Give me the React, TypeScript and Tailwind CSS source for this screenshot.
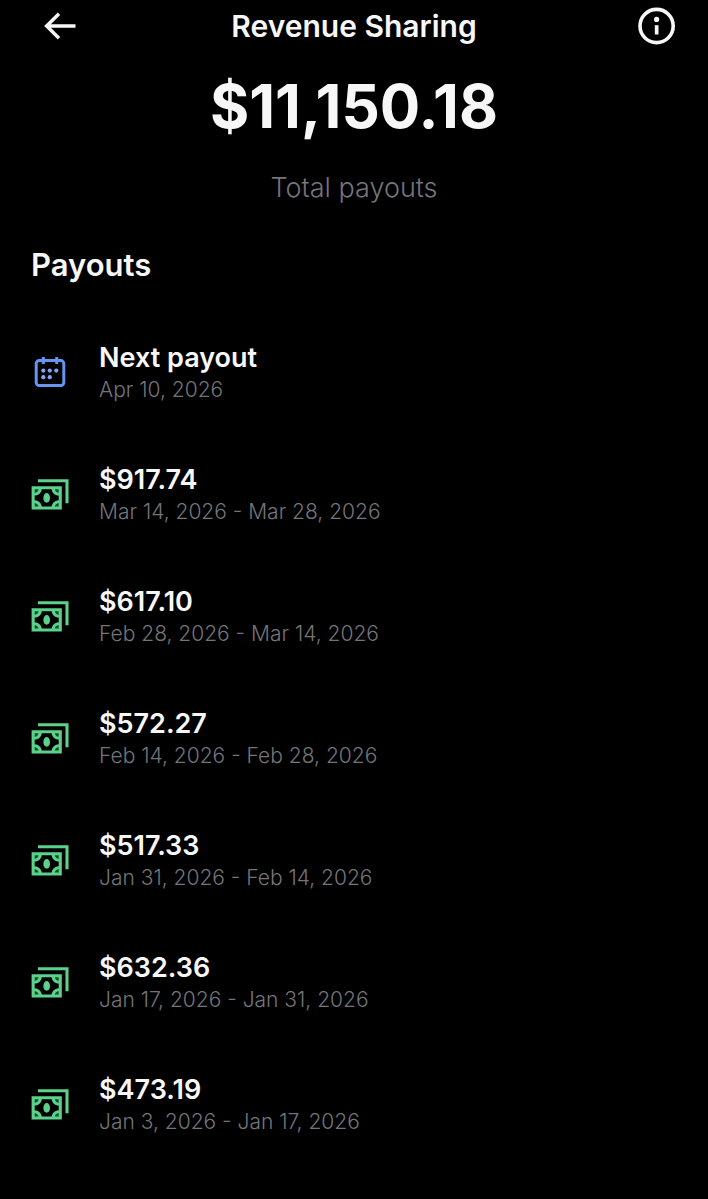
import React from "react";

type Payout = { amount: string; period: string };

const payouts: Payout[] = [
  { amount: "$917.74", period: "Mar 14, 2026 - Mar 28, 2026" },
  { amount: "$617.10", period: "Feb 28, 2026 - Mar 14, 2026" },
  { amount: "$572.27", period: "Feb 14, 2026 - Feb 28, 2026" },
  { amount: "$517.33", period: "Jan 31, 2026 - Feb 14, 2026" },
  { amount: "$632.36", period: "Jan 17, 2026 - Jan 31, 2026" },
  { amount: "$473.19", period: "Jan 3, 2026 - Jan 17, 2026" },
];

function BackIcon() {
  return (
    <svg width="32" height="28" viewBox="0 0 32 28" fill="none" stroke="currentColor" strokeWidth="3.4" aria-hidden="true">
      <path d="M31.5 14H3M15 1.8L2.6 14 15 26.2" />
    </svg>
  );
}

function InfoIcon() {
  return (
    <svg width="38" height="38" viewBox="0 0 38 38" aria-hidden="true">
      <circle cx="18.6" cy="19" r="16.6" fill="none" stroke="currentColor" strokeWidth="3.6" />
      <circle cx="18.6" cy="12.4" r="2.6" fill="currentColor" />
      <path d="M16.8 18.2h3.7v9.3h-3.7z" fill="currentColor" />
    </svg>
  );
}

function CalendarIcon() {
  return (
    <svg width="38" height="32" viewBox="0 0 38 32" fill="none" aria-hidden="true">
      <rect x="5.2" y="3.6" width="27.6" height="25" rx="3" stroke="#6496f0" strokeWidth="3" />
      <path d="M12.3 0v7M25.7 0v7" stroke="#6496f0" strokeWidth="3" />
      <g fill="#7fa6f2">
        <circle cx="12.3" cy="13.6" r="2.1" />
        <circle cx="18.8" cy="13.6" r="2.1" />
        <circle cx="25.3" cy="13.6" r="2.1" />
        <circle cx="12.3" cy="20.2" r="2.1" />
        <circle cx="18.8" cy="20.2" r="2.1" />
      </g>
    </svg>
  );
}

function CashIcon() {
  return (
    <svg width="38" height="32" viewBox="0 0 38 32" fill="none" aria-hidden="true">
      <path d="M7 1.8h29v22.4" stroke="#5bd18b" strokeWidth="3.1" />
      <path
        fill="#5bd18b"
        fillRule="evenodd"
        d="M0.6 7.2h30.2v23.4H0.6zM10.8 10.2C10.3 13.8 7.6 16.3 3.7 16.6v4.6c3.9.3 6.6 2.8 7.1 6.4h9.8c.5-3.6 3.2-6.1 7.1-6.4v-4.6c-3.9-.3-6.6-2.8-7.1-6.4z"
      />
      <path
        d="M3.7 10.2h3.9c-.3 2-1.8 3.3-3.9 3.6zM27.7 10.2h-3.9c.3 2 1.8 3.3 3.9 3.6zM3.7 27.6h3.9c-.3-2-1.8-3.3-3.9-3.6zM27.7 27.6h-3.9c.3-2 1.8-3.3 3.9-3.6z"
        fill="#174d2e"
      />
      <ellipse cx="15.7" cy="18.9" rx="3.3" ry="4.9" fill="#5bd18b" />
    </svg>
  );
}

function Row({ icon, title, detail }: { icon: React.ReactNode; title: string; detail: string }) {
  return (
    <li className="flex items-center gap-[30px]">
      <span className="shrink-0">{icon}</span>
      <div className="min-w-0 pt-0.5">
        <h3 className="text-[27px] font-semibold leading-8 text-[#f7f7f8]">{title}</h3>
        <p className="text-[21px] font-light leading-8 text-[#74757a]">{detail}</p>
      </div>
    </li>
  );
}

export default function App() {
  return (
    <main className="min-h-screen bg-black pb-14 font-['Inter','Liberation_Sans',sans-serif] text-[#f7f7f8]">
      <header className="grid grid-cols-[1fr_auto_1fr] items-center pt-[7px] pr-8 pl-11">
        <button type="button" aria-label="Back" className="justify-self-start">
          <BackIcon />
        </button>
        <h1 className="pr-3 text-[30px] font-semibold leading-[38px]">Revenue Sharing</h1>
        <button type="button" aria-label="About revenue sharing" className="justify-self-end">
          <InfoIcon />
        </button>
      </header>
      <section className="pt-[25px] text-center">
        <p className="text-[60px] font-bold leading-[72px]">$11,150.18</p>
        <p className="pt-7 text-[27px] font-light leading-9 text-[#74757a]">Total payouts</p>
      </section>
      <section className="px-[31px] pt-[39px]">
        <h2 className="text-[31px] font-semibold leading-10">Payouts</h2>
        <ul className="flex flex-col gap-14 pt-[55px]">
          <Row icon={<CalendarIcon />} title="Next payout" detail="Apr 10, 2026" />
          {payouts.map((p) => (
            <Row key={p.period} icon={<CashIcon />} title={p.amount} detail={p.period} />
          ))}
        </ul>
      </section>
    </main>
  );
}
